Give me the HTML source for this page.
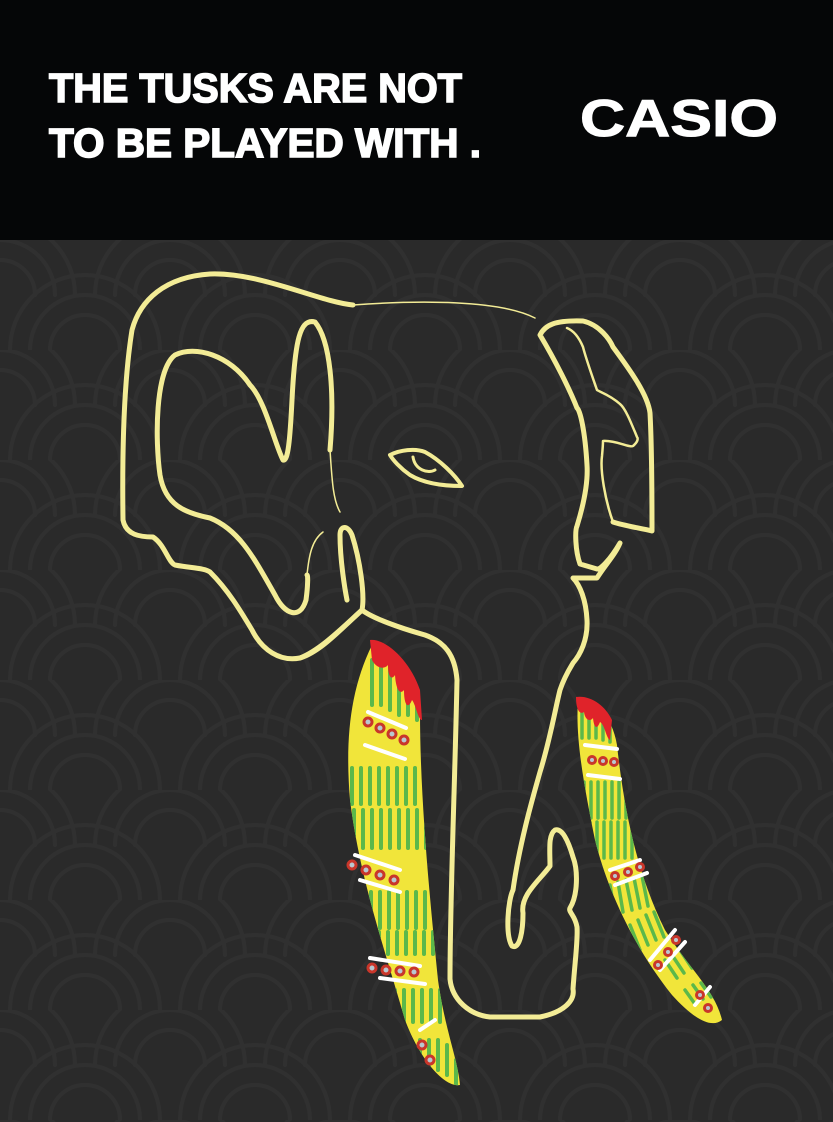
<!DOCTYPE html>
<html><head><style>
html,body{margin:0;padding:0;background:#2a2a2a;}
svg{display:block}
</style></head><body>
<svg width="833" height="1122" viewBox="0 0 833 1122" xmlns="http://www.w3.org/2000/svg">
<defs>
<pattern id="sc" x="0" y="240" width="170" height="110" patternUnits="userSpaceOnUse">
<g fill="none" stroke="#303030" stroke-width="4" stroke-linecap="round">
<path d="M10 110 A75 75 0 0 1 160 110"/><path d="M30 110 A55 55 0 0 1 140 110"/><path d="M50 110 A35 35 0 0 1 120 110"/>
<path d="M-75 55 A75 75 0 0 1 75 55"/><path d="M95 55 A75 75 0 0 1 245 55"/>
<path d="M-55 55 A55 55 0 0 1 55 55"/><path d="M115 55 A55 55 0 0 1 225 55"/>
<path d="M-35 55 A35 35 0 0 1 35 55"/><path d="M135 55 A35 35 0 0 1 205 55"/>
</g>
</pattern>
<clipPath id="lt"><path d="M372 645 C390 650 410 680 420 712 C420 800 430 900 438 980 C445 1030 458 1060 460 1085 C445 1088 420 1060 405 1020 C385 950 360 880 350 800 C345 740 350 690 372 645 Z"/></clipPath>
<clipPath id="rt"><path d="M578 700 C595 700 612 715 617 745 C625 820 640 880 665 930 C690 970 715 990 722 1020 C710 1030 690 1015 672 995 C640 955 610 900 595 840 C585 790 575 740 578 700 Z"/></clipPath>
</defs>
<rect width="833" height="1122" fill="#2a2a2a"/>
<rect y="240" width="833" height="882" fill="url(#sc)"/>
<rect width="833" height="240" fill="#050607"/>
<g fill="#fff" stroke="#fff" font-family="Liberation Sans, sans-serif" font-weight="bold">
<text x="49" y="102" font-size="41" stroke-width="1.6" textLength="413" lengthAdjust="spacingAndGlyphs">THE TUSKS ARE NOT</text>
<text x="49" y="157" font-size="41" stroke-width="1.6" textLength="432" lengthAdjust="spacingAndGlyphs">TO BE PLAYED WITH .</text>
<text x="580" y="136" font-size="52" stroke-width="1" textLength="198" lengthAdjust="spacingAndGlyphs">CASIO</text>
</g>
<g fill="none" stroke="#f3ec96" stroke-linecap="round" stroke-linejoin="round">
<path stroke-width="1.5" d="M353 305 C420 300 500 300 535 318"/>
<path stroke-width="5" d="M353 305 C320 302 260 272 210 274 C165 277 140 300 132 330 C124 380 122 450 123 520 C126 535 140 537 153 537 C165 545 168 562 175 565 C190 568 205 568 210 572 C228 590 240 610 252 630 C262 650 280 662 300 658 C320 652 340 630 362 610 C372 618 400 628 425 635 C445 642 455 655 457 680 C455 780 450 900 450 979 C452 1000 470 1015 490 1017 L540 1017 C565 1012 575 1000 573 989 C575 960 578 940 577 927 C575 915 568 912 570 908 C578 895 578 870 573 857 C568 840 562 828 555 830 C548 835 550 850 550 866 C540 880 520 895 523 913 C523 930 520 950 512 946 C505 935 508 900 513 890 C520 840 535 790 540 772 C550 740 555 710 560 690 C565 675 572 665 573 663 C580 655 588 640 587 620 C586 600 580 585 573 578 L597 578 C605 565 615 555 620 543 C610 560 600 570 597 569 L580 564 C575 550 575 530 577 526 C585 500 588 480 587 465 C585 430 580 410 577 408 C570 390 555 360 540 335 C545 325 555 320 583 321 C600 325 610 340 613 347 C630 370 648 395 650 413 C652 450 652 500 652 531 C640 528 625 526 613 522"/>
<path stroke-width="2.5" d="M613 522 C605 500 600 470 602 456 C603 445 603 441 603 441 C615 440 630 448 633 446 C640 440 637 437 637 437 C630 420 625 408 620 404 C610 395 600 392 597 390 C590 370 585 355 583 347 C578 335 572 330 567 328"/>
<path stroke-width="5" d="M330 450 C335 390 330 340 315 322 C300 318 295 340 292 400 C290 440 288 462 283 460 C275 445 265 400 250 385 C230 355 195 345 175 355 C155 370 155 440 160 475 C165 505 185 513 210 518 C240 530 255 560 275 595 C285 615 300 620 306 600 C308 585 308 575 307 575"/>
<path stroke-width="1.5" d="M330 450 C332 480 333 500 340 512 M307 575 C309 555 312 540 323 532"/>
<path stroke-width="5" d="M300 658 C320 650 340 630 362 610 C365 595 360 560 352 535 C348 525 340 525 340 535 C340 560 345 590 347 600"/>
<path stroke-width="4" d="M390 455 C400 450 415 448 425 452 C440 460 455 475 462 486 C445 486 425 484 410 475 C400 468 393 460 390 455 Z"/>
<path stroke-width="3" d="M413 457 C415 470 428 474 435 470"/>
</g>
<!-- left tusk -->
<path fill="#f1e53a" d="M372 645 C390 650 410 680 420 712 C420 800 430 900 438 980 C445 1030 458 1060 460 1085 C445 1088 420 1060 405 1020 C385 950 360 880 350 800 C345 740 350 690 372 645 Z"/>
<g clip-path="url(#lt)" stroke="#5bb84a" stroke-width="4" stroke-linecap="round">
<path d="M372 660v45M381 660v45M390 665v45M399 670v45M408 675v40M417 690v30"/>
<path d="M352 768v36M361 768v36M370 768v36M379 768v36M388 768v36M397 768v36M406 768v36M415 768v36"/>
<path d="M354 810v38M363 810v38M372 810v38M381 810v38M390 810v38M399 810v38M408 810v38M417 810v38M426 810v38"/>
<path d="M362 892v36M371 892v36M380 892v36M389 892v36M398 892v36M407 892v36M416 892v36M425 892v36"/>
<path d="M370 932v22M379 932v22M388 932v22M397 932v22M406 932v22M415 932v22M424 932v22M433 932v22"/>
<path d="M386 990v32M395 990v32M404 990v32M413 990v32M422 990v32M431 990v32M440 990v32"/>
<path d="M420 1040v30M429 1040v30M438 1040v30M447 1045v30M456 1060v25"/>
</g>
<g stroke="#fff" stroke-width="4" stroke-linecap="round">
<path d="M368 712l38 16M365 745l40 14M355 855l45 15M360 880l40 12M370 958l50 8M380 978l45 6M420 1030l15-10"/>
</g>
<g fill="#b8c8d0" stroke="#c9362a" stroke-width="3">
<circle cx="368" cy="722" r="4"/><circle cx="380" cy="728" r="4"/><circle cx="392" cy="734" r="4"/><circle cx="404" cy="740" r="4"/>
<circle cx="352" cy="865" r="4"/><circle cx="366" cy="870" r="4"/><circle cx="380" cy="875" r="4"/><circle cx="394" cy="880" r="4"/>
<circle cx="372" cy="968" r="4"/><circle cx="386" cy="970" r="4"/><circle cx="400" cy="971" r="4"/><circle cx="414" cy="972" r="4"/>
<circle cx="422" cy="1045" r="4"/><circle cx="430" cy="1060" r="4"/>
</g>
<path fill="#e0232a" d="M370 640 C385 638 410 660 420 690 L422 720 C418 720 416 705 412 700 C408 710 404 705 404 690 C400 695 396 690 395 675 C392 680 388 678 388 665 C384 670 376 668 372 660 Z"/>
<!-- right tusk -->
<path fill="#f1e53a" d="M578 700 C595 700 612 715 617 745 C625 820 640 880 665 930 C690 970 715 990 722 1020 C710 1030 690 1015 672 995 C640 955 610 900 595 840 C585 790 575 740 578 700 Z"/>
<g clip-path="url(#rt)" stroke="#5bb84a" stroke-width="3.5" stroke-linecap="round">
<path d="M582 710v28M589 710v28M596 710v28M603 712v28M610 718v24"/>
<path d="M584 782v36M591 782v36M598 782v36M605 782v36M612 782v36M619 782v36M626 782v36"/>
<path d="M590 822v36M597 822v36M604 822v36M611 822v36M618 822v36M625 822v36M632 822v36"/>
<path d="M602 885l4 30M610 885l5 30M618 882l5 30M626 880l6 30M634 878l6 30M642 876l6 30M650 876l7 30"/>
<path d="M630 925l10 25M638 920l10 25M646 915l10 25M654 912l10 25M662 910l10 25"/>
<path d="M665 960l12 18M672 955l12 18M680 950l12 18M688 948l12 18M696 948l12 18"/>
<path d="M685 990l10 14M693 985l10 14M701 983l10 14M709 990l10 14"/>
</g>
<g stroke="#fff" stroke-width="4" stroke-linecap="round">
<path d="M585 745l32 4M588 775l32 4M610 870l30-10M615 885l32-12M650 960l25-30M660 970l25-28M695 1005l15-18"/>
</g>
<g fill="#b8c8d0" stroke="#c9362a" stroke-width="3">
<circle cx="592" cy="760" r="3.5"/><circle cx="603" cy="761" r="3.5"/><circle cx="614" cy="762" r="3.5"/>
<circle cx="615" cy="876" r="3.5"/><circle cx="628" cy="872" r="3.5"/><circle cx="640" cy="867" r="3.5"/>
<circle cx="658" cy="965" r="3.5"/><circle cx="668" cy="952" r="3.5"/><circle cx="676" cy="940" r="3.5"/>
<circle cx="700" cy="995" r="3.5"/><circle cx="708" cy="1008" r="3.5"/>
</g>
<path fill="#e0232a" d="M576 697 C590 695 605 705 612 720 L610 740 C606 738 605 725 600 722 C597 730 594 728 593 718 C590 722 585 720 584 712 C580 715 576 710 576 697 Z"/>
</svg>
</body></html>
